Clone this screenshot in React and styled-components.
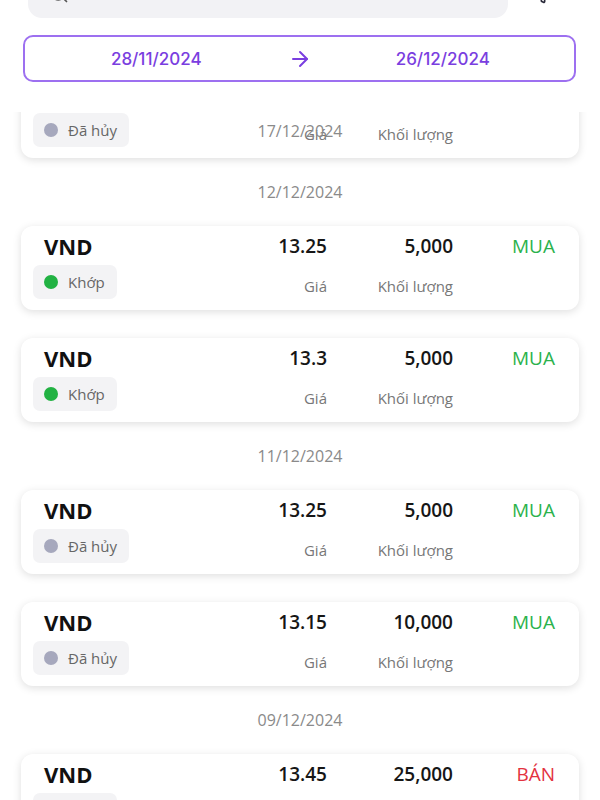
import { ArrowRight, Filter, Search } from "lucide-react";
import styled, { createGlobalStyle } from "styled-components";

const GlobalStyle = createGlobalStyle`
  html, body {
    margin: 0;
    padding: 0;
    background: #ffffff;
    overflow: hidden;
  }

  * {
    box-sizing: border-box;
  }
`;

/* the screen is scrolled a little: the top of the search bar sits above the window */
const Screen = styled.div`
  height: 830px;
  margin-top: -30px;
  display: flex;
  flex-direction: column;
  background: #ffffff;
  font-family: "Open Sans", "Noto Sans", sans-serif;
  overflow: hidden;
`;

const Header = styled.header`
  display: flex;
  flex-direction: column;
  padding-bottom: 30px;
  background: #ffffff;
`;

const SearchRow = styled.div`
  display: flex;
  align-items: center;
  height: 48px;
  padding-left: 28px;
`;

const SearchBox = styled.div`
  width: 480px;
  height: 48px;
  display: flex;
  align-items: center;
  padding-left: 21px;
  background: #f2f2f5;
  border-radius: 14px;
  color: #555;
`;

const FilterButton = styled.div`
  flex: 1;
  display: flex;
  justify-content: center;
  padding-right: 22px;
  color: #2a2a3a;
`;

const DateRange = styled.div`
  height: 47px;
  margin: 17px 24px 0 23px;
  display: grid;
  grid-template-columns: 1fr auto 1fr;
  align-items: center;
  border: 2px solid #9d70f0;
  border-radius: 10px;
  font-family: Inter, "Open Sans", sans-serif;
  font-size: 17px;
  font-weight: 500;
  color: #7a3ee0;
`;

const RangeDate = styled.span`
  text-align: center;
`;

const Viewport = styled.div`
  flex: 1;
  position: relative;
  overflow: hidden;
`;

const StickyDate = styled.div`
  position: absolute;
  top: 7px;
  left: 0;
  right: 0;
  z-index: 2;
  text-align: center;
  font-size: 16px;
  line-height: 24px;
  color: #8a8a8a;
`;

const List = styled.div`
  margin-top: -38px;
  padding: 0 21px;
  display: flex;
  flex-direction: column;
`;

const Group = styled.div`
  display: flex;
  flex-direction: column;
  gap: 28px;
`;

const DateHeader = styled.div`
  padding: 22px 0;
  text-align: center;
  font-size: 16px;
  line-height: 24px;
  color: #8a8a8a;
`;

const Card = styled.div`
  display: grid;
  grid-template-columns: 1fr 100px 126px 102px;
  row-gap: 4px;
  align-items: center;
  padding: 5px 24px 11px 12px;
  background: #ffffff;
  border-radius: 12px;
  box-shadow: 0 2px 9px rgba(0, 0, 0, 0.13);
`;

const Symbol = styled.div`
  padding-left: 11px;
  font-size: 22px;
  font-weight: 700;
  line-height: 30px;
  color: #111;
`;

const Value = styled.div`
  text-align: right;
  font-size: 19px;
  font-weight: 600;
  line-height: 30px;
  color: #161616;
`;

const Side = styled.div`
  text-align: right;
  font-size: 19px;
  line-height: 30px;
  color: ${(p) => (p.$sell ? "#e3323f" : "#2bb24c")};
`;

const StatusPill = styled.div`
  justify-self: start;
  height: 34px;
  display: inline-flex;
  align-items: center;
  gap: 10px;
  padding: 0 12px 0 11px;
  background: #f3f3f5;
  border-radius: 7px;
  font-size: 15px;
  color: #666;
`;

const Dot = styled.span`
  width: 14px;
  height: 14px;
  border-radius: 50%;
  background: ${(p) => (p.$matched ? "#22b243" : "#a6a8bd")};
`;

const Label = styled.div`
  text-align: right;
  padding-top: 8px;
  font-size: 15px;
  line-height: 20px;
  color: #777;
`;

const groups = [
  {
    date: null,
    orders: [{ price: "13.3", volume: "5,000", side: "MUA", matched: false }],
  },
  {
    date: "12/12/2024",
    orders: [
      { price: "13.25", volume: "5,000", side: "MUA", matched: true },
      { price: "13.3", volume: "5,000", side: "MUA", matched: true },
    ],
  },
  {
    date: "11/12/2024",
    orders: [
      { price: "13.25", volume: "5,000", side: "MUA", matched: false },
      { price: "13.15", volume: "10,000", side: "MUA", matched: false },
    ],
  },
  {
    date: "09/12/2024",
    orders: [{ price: "13.45", volume: "25,000", side: "BÁN", matched: true }],
  },
];

function OrderCard({ price, volume, side, matched }) {
  return (
    <Card>
      <Symbol>VND</Symbol>
      <Value>{price}</Value>
      <Value>{volume}</Value>
      <Side $sell={side === "BÁN"}>{side}</Side>
      <StatusPill>
        <Dot $matched={matched} />
        {matched ? "Khớp" : "Đã hủy"}
      </StatusPill>
      <Label>Giá</Label>
      <Label>Khối lượng</Label>
    </Card>
  );
}

export default function App() {
  return (
    <>
      <GlobalStyle />
      <Screen>
        <Header>
          <SearchRow>
            <SearchBox>
              <Search size={20} strokeWidth={2} />
            </SearchBox>
            <FilterButton>
              <Filter size={20} strokeWidth={2} />
            </FilterButton>
          </SearchRow>
          <DateRange>
            <RangeDate>28/11/2024</RangeDate>
            <ArrowRight size={24} strokeWidth={2} />
            <RangeDate>26/12/2024</RangeDate>
          </DateRange>
        </Header>

        <Viewport>
          <StickyDate>17/12/2024</StickyDate>
          <List>
            {groups.map((group, i) => (
              <div key={i}>
                {group.date && <DateHeader>{group.date}</DateHeader>}
                <Group>
                  {group.orders.map((order, j) => (
                    <OrderCard key={j} {...order} />
                  ))}
                </Group>
              </div>
            ))}
          </List>
        </Viewport>
      </Screen>
    </>
  );
}
